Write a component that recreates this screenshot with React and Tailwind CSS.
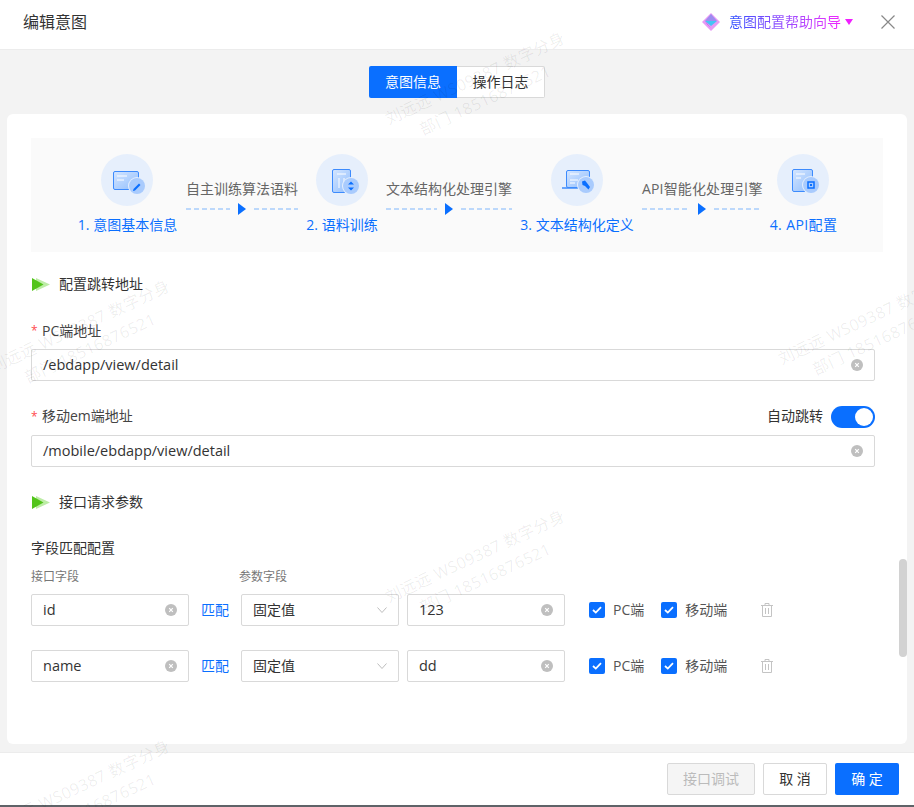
const blue = "text-[#0a6fff]";

const StepIcon = ({ id, children, badge, glyph }) => (
  <div className="w-[52px] h-[52px] rounded-full bg-[#e6effc] flex items-center justify-center">
    <svg width="52" height="52" viewBox="0 0 52 52" fill="none">
      <defs>
        <linearGradient id={id} x1="0" y1="0" x2="1" y2="1">
          <stop offset="0" stopColor="#d5e6ff" />
          <stop offset="1" stopColor="#8fbdfd" />
        </linearGradient>
      </defs>
      {children}
      <circle cx={badge[0]} cy={badge[1]} r="9" fill="#e6effc" />
      <circle cx={badge[0]} cy={badge[1]} r="8" fill="#a9cbfd" />
      {glyph}
    </svg>
  </div>
);

const Step = ({ label, icon, width, iconClass = "", labelClass = "" }) => (
  <div className={`flex flex-col items-center shrink-0 ${width}`}>
    <div className={iconClass}>{icon}</div>
    <div className={`mt-2 text-sm leading-[22px] whitespace-nowrap ${blue} ${labelClass}`}>{label}</div>
  </div>
);

const Connector = ({ text, width, textClass = "" }) => (
  <div className={`${width} shrink-0 pt-6`}>
    <div className={`text-sm leading-[22px] text-[#666] whitespace-nowrap text-center ${textClass}`}>{text}</div>
    <div className="mt-[3px] flex items-center h-3">
      <div className="flex-1 h-[2px] bg-[repeating-linear-gradient(90deg,#bcd8fb_0,#bcd8fb_5px,transparent_5px,transparent_8px)]" />
      <svg width="8" height="12" viewBox="0 0 8 12" className="mx-2">
        <path d="M0 0L8 6L0 12Z" fill="#0a6fff" />
      </svg>
      <div className="flex-1 h-[2px] bg-[repeating-linear-gradient(90deg,#bcd8fb_0,#bcd8fb_5px,transparent_5px,transparent_8px)]" />
    </div>
  </div>
);

const SectionTitle = ({ children }) => (
  <div className="flex items-center h-5 text-sm text-[#333]">
    <svg width="18" height="13" viewBox="0 0 18 13" className="mr-[9px] ml-px">
      <path d="M4 0L18 6.5L4 13Z" fill="#bdeca6" />
      <path d="M0 0L11.5 6.5L0 13Z" fill="#52c41a" />
    </svg>
    {children}
  </div>
);

const ClearIcon = () => (
  <svg width="12" height="12" viewBox="0 0 12 12" className="shrink-0">
    <circle cx="6" cy="6" r="6" fill="#bfbfbf" />
    <path d="M4.2 4.2L7.8 7.8M7.8 4.2L4.2 7.8" stroke="#fff" strokeWidth="1.2" />
  </svg>
);

const Input = ({ value, className = "" }) => (
  <div className={`h-8 flex items-center justify-between px-[11px] border border-[#d9d9d9] rounded-[2px] bg-white text-[14.5px] text-[#333] ${className}`}>
    <span>{value}</span>
    <ClearIcon />
  </div>
);

const Check = ({ label, className = "" }) => (
  <div className={`flex items-center gap-2 text-sm text-[#555] ${className}`}>
    <div className="w-4 h-4 rounded-[2px] bg-[#0a6fff] flex items-center justify-center">
      <svg width="10" height="8" viewBox="0 0 10 8" fill="none">
        <path d="M1 4L3.8 6.6L9 1.2" stroke="#fff" strokeWidth="1.8" />
      </svg>
    </div>
    {label}
  </div>
);

const Trash = () => (
  <svg width="12" height="14" viewBox="0 0 12 14" fill="none" stroke="#c4c4c4" strokeWidth="1" className="ml-[34px]">
    <path d="M0 2.5H12M4 2.5V.5H8V2.5M1.5 2.5V13.5H10.5V2.5M4.5 5V11M7.5 5V11" />
  </svg>
);

const FieldRow = ({ name, value, className = "" }) => (
  <div className={`flex items-center ${className}`}>
    <Input value={name} className="w-[158px]" />
    <span className={`ml-3 w-[28px] text-sm whitespace-nowrap ${blue}`}>匹配</span>
    <div className="ml-3 w-[158px] h-8 flex items-center justify-between px-[11px] border border-[#d9d9d9] rounded-[2px] text-sm text-[#333]">
      固定值
      <svg width="10" height="6" viewBox="0 0 10 6" fill="none">
        <path d="M.5.5L5 5.5L9.5.5" stroke="#bdbdbd" />
      </svg>
    </div>
    <Input value={value} className="ml-2 w-[158px]" />
    <Check label="PC端" className="ml-6" />
    <Check label="移动端" className="ml-[17px]" />
    <Trash />
  </div>
);

const Watermark = ({ className }) => (
  <div className={`absolute w-[220px] text-center -rotate-[25deg] text-base tracking-[0.4px] leading-6 text-black/[0.07] pointer-events-none whitespace-nowrap ${className}`}>
    <div>刘远远 WS09387 数字分身</div>
    <div>部门 18516876521</div>
  </div>
);

const App = () => {
  return (
    <div className="relative w-[914px] h-[807px] overflow-hidden bg-white flex flex-col font-['Open_Sans','Noto_Sans_CJK_SC',sans-serif]">
      <header className="h-[50px] shrink-0 flex items-center border-b border-[#ececec] pl-[23px] pr-[19px]">
        <div className="text-base text-[#333] flex-1 -mt-[5px]">编辑意图</div>
        <svg width="18" height="18" viewBox="0 0 18 18" className="mr-[9px] -mt-[5px]">
          <path d="M9 0L18 9L9 18L0 9Z" fill="#e79af5" />
          <path d="M9 1L3 8H15Z" fill="#9d8cf0" />
          <path d="M3 8L9 13L15 8Z" fill="#45c3f5" />
          <path d="M3 8L9 15L5 11Z" fill="#a13ce0" />
        </svg>
        <span className="text-sm bg-linear-to-r from-[#1f4bff] to-[#f01fff] bg-clip-text text-transparent -mt-[5px]">意图配置帮助向导</span>
        <svg width="8" height="6" viewBox="0 0 8 6" className="ml-1 -mt-[5px]">
          <path d="M0 0H8L4 6Z" fill="#f01fff" />
        </svg>
        <svg width="14" height="14" viewBox="0 0 14 14" fill="none" className="ml-7 -mt-[5px]">
          <path d="M.5.5L13.5 13.5M13.5.5L.5 13.5" stroke="#888" strokeWidth="1.2" />
        </svg>
      </header>

      <main className="flex-1 bg-[#f3f3f3] flex flex-col pt-4 pb-2 px-[7px] min-h-0">
        <div className="flex justify-center shrink-0">
          <div className="w-[88px] h-8 flex items-center justify-center bg-[#0a6fff] text-white text-sm rounded-l-[2px]">意图信息</div>
          <div className="w-[88px] h-8 flex items-center justify-center bg-white text-[#333] text-sm border border-l-0 border-[#d9d9d9] rounded-r-[2px]">操作日志</div>
        </div>

        <div className="relative mt-4 flex-1 bg-white rounded-md pl-6 pr-6 pt-6 min-h-0">
          <div className="h-[114px] bg-[#fafafa] flex gap-2 pl-[47px] items-start pt-4">
            <Step
              label="1. 意图基本信息"
              width="w-[99px]"
              iconClass="mr-0.5"
              icon={
                <StepIcon
                  id="g1"
                  badge={[36, 32]}
                  glyph={<path d="M32.5 35L38 29.5L39.5 31L34 36.5L32 37Z" fill="#0a6fff" />}
                >
                  <rect x="12.5" y="17.5" width="25" height="18" rx="1.5" fill="url(#g1)" stroke="#3d8bfd" />
                  <path d="M16 22H26M16 26H23" stroke="#fff" />
                </StepIcon>
              }
            />
            <Connector text="自主训练算法语料" width="w-[112px] ml-px" />
            <Step
              label="2. 语料训练"
              width="w-[72px]"
              icon={
                <StepIcon
                  id="g2"
                  badge={[35, 32]}
                  glyph={<path d="M35 27.5L38 30.5H32ZM35 36.5L32 33.5H38Z" fill="#0a6fff" />}
                >
                  <rect x="16.5" y="15.5" width="18" height="23" rx="1.5" fill="url(#g2)" stroke="#3d8bfd" />
                  <path d="M21 20H30M23 24V34M28 24V34" stroke="#fff" />
                </StepIcon>
              }
            />
            <Connector text="文本结构化处理引擎" width="w-[126px]" />
            <Step
              label="3. 文本结构化定义"
              width="w-[114px]"
              icon={
                <StepIcon
                  id="g3"
                  badge={[35, 31]}
                  glyph={<path d="M31 27.5L34 26.5L36 29L39 33L37.5 35.5L34 32L31.5 31Z" fill="#0a6fff" />}
                >
                  <rect x="15.5" y="16.5" width="23" height="17" rx="1.5" fill="url(#g3)" stroke="#3d8bfd" />
                  <path d="M11 34H38" stroke="#3d8bfd" strokeWidth="1.5" />
                  <path d="M19 20H28M19 26H27M19 29H24" stroke="#fff" />
                </StepIcon>
              }
            />
            <Connector text="API智能化处理引擎" width="w-[120px]" textClass="tracking-[0.15px]" />
            <Step
              label="4. API配置"
              width="w-[67px]"
              iconClass="mr-0.5"
              labelClass="tracking-[0.4px]"
              icon={
                <StepIcon
                  id="g4"
                  badge={[34, 31]}
                  glyph={
                    <>
                      <rect x="31" y="28" width="6" height="6" fill="none" stroke="#0a6fff" strokeWidth="1.5" />
                      <rect x="33" y="30" width="2" height="2" fill="#0a6fff" />
                    </>
                  }
                >
                  <rect x="15.5" y="15.5" width="20" height="22" rx="1.5" fill="url(#g4)" stroke="#3d8bfd" />
                  <path d="M19 20H28M19 24H24" stroke="#fff" />
                </StepIcon>
              }
            />
          </div>

          <div className="pr-2">
            <div className="mt-[22px]">
              <SectionTitle>配置跳转地址</SectionTitle>
            </div>

            <div className="mt-[27px] flex items-center h-5 text-sm text-[#444]">
              <span className="w-[11px] text-[#ff4d4f] text-xs leading-none">*</span>
              PC端地址
            </div>
            <Input value="/ebdapp/view/detail" className="mt-2" />

            <div className="mt-[25px] flex items-center h-[22px] text-sm text-[#444]">
              <span className="w-[11px] text-[#ff4d4f] text-xs leading-none">*</span>
              <span className="flex-1 pb-[2px]">移动em端地址</span>
              <span className="text-[#333] mr-2 pb-[2px]">自动跳转</span>
              <div className="w-11 h-[22px] rounded-full bg-[#0a6fff] flex items-center justify-end pr-0.5">
                <div className="w-[18px] h-[18px] rounded-full bg-white" />
              </div>
            </div>
            <Input value="/mobile/ebdapp/view/detail" className="mt-[7px]" />

            <div className="mt-[25px]">
              <SectionTitle>接口请求参数</SectionTitle>
            </div>

            <div className="mt-[26px] text-sm leading-5 text-[#333]">字段匹配配置</div>
            <div className="mt-[11px] flex text-xs leading-[16px] text-[#777]">
              <span className="w-[208px]">接口字段</span>
              <span>参数字段</span>
            </div>
            <FieldRow name="id" value="123" className="mt-[9px]" />
            <FieldRow name="name" value="dd" className="mt-6" />
          </div>

          <div className="absolute right-0 top-[445px] w-2 h-[98px] rounded-full bg-[#d2d2d2]" />
        </div>
      </main>

      <footer className="h-[53px] shrink-0 border-t border-[#ececec] flex items-center justify-end gap-2 pr-[15px] text-sm">
        <div className="w-[88px] h-8 flex items-center justify-center bg-[#f5f5f5] border border-[#d9d9d9] rounded-[2px] text-[#bbb]">接口调试</div>
        <div className="w-16 h-8 flex items-center justify-center bg-white border border-[#d9d9d9] rounded-[2px] text-[#333]">取 消</div>
        <div className="w-16 h-8 flex items-center justify-center bg-[#0a6fff] rounded-[2px] text-white">确 定</div>
      </footer>
      <div className="h-[2px] shrink-0 bg-[#5f6368]" />

      <Watermark className="left-[370px] top-[65px]" />
      <Watermark className="left-[-25px] top-[313px]" />
      <Watermark className="left-[763px] top-[305px]" />
      <Watermark className="left-[370px] top-[543px]" />
      <Watermark className="left-[-25px] top-[773px]" />
    </div>
  );
};

export default App;
